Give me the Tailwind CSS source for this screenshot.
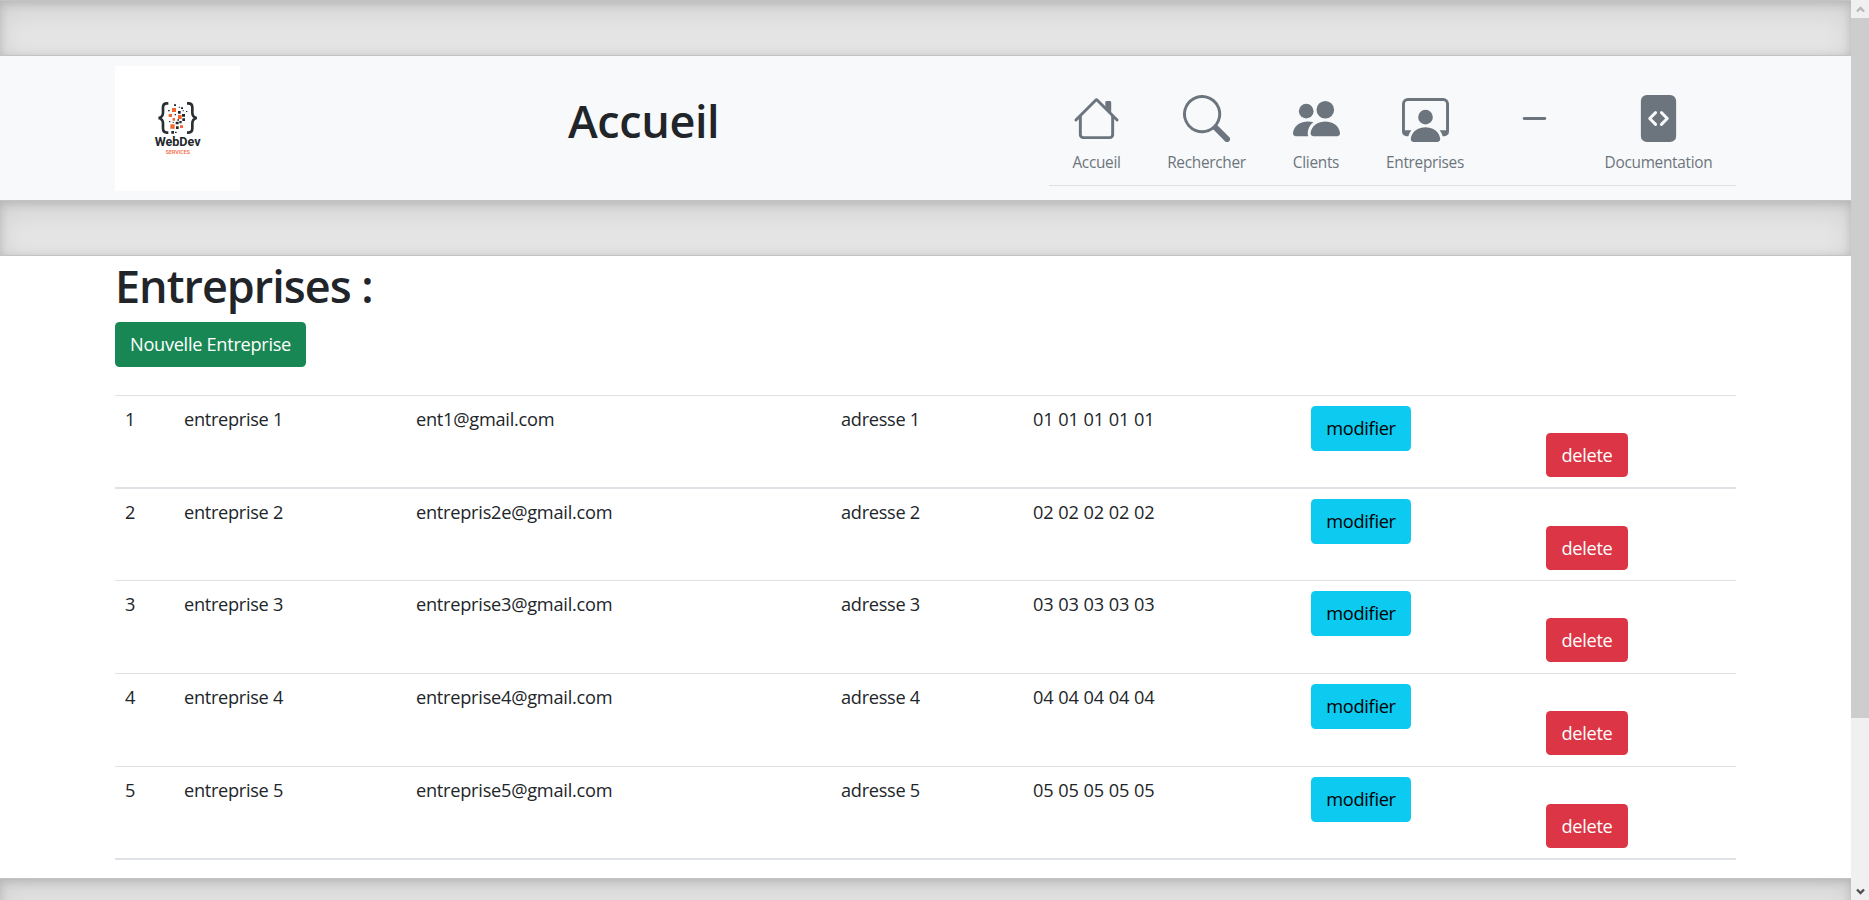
<!DOCTYPE html>
<html lang="fr">
<head>
<meta charset="utf-8">
<title>Entreprises</title>
<script src="https://cdn.jsdelivr.net/npm/@tailwindcss/browser@4"></script>
</head>
<body class="flex h-[900px] w-[1869px] overflow-hidden bg-white font-['Open_Sans','Noto_Sans',sans-serif] text-[18.2px] tracking-[-0.3px] text-[#212529]">
<div class="flex h-full w-[1851px] flex-col overflow-hidden">
  <div class="h-[56px] shrink-0 border-y border-black/15 bg-black/10 shadow-[inset_0_9.4px_28px_rgba(0,0,0,0.1),inset_0_2.3px_9.4px_rgba(0,0,0,0.15)]"></div>
  <header class="flex h-[144px] shrink-0 items-start bg-[#f8f9fa] pl-[115px] pr-[115px]">
    <svg class="mt-[10px] h-[125px] w-[125px] shrink-0" viewBox="45 48 375 375">
      <rect x="45" y="48" width="375" height="375" fill="#fff"/>
      <g fill="none" stroke="#2a2f33" stroke-width="8">
        <path d="M205 160h-4q-12 0-12 12v16q0 13-13 16q13 3 13 16v15q0 13 12 13h4"/>
        <path d="M261 160h4q12 0 12 12v16q0 13 13 16q-13 3-13 16v15q0 13-12 13h-4"/>
      </g>
      <g fill="#f4652f">
        <path d="M216 174h12v12h-12zM206 192h10v9h-10zM234 195h11v12h-11zM218 204h7v8h-7zM211 223h13v13h-13zM240 226h9v8h-9z"/>
      </g>
      <g fill="#23282c">
        <path d="M222 163h6v5h-6zM204 180h5v4h-5zM234 183h8v8h-8zM246 192h9v8h-9zM247 205h8v8h-8zM227 215h9v8h-9zM238 213h7v7h-7zM228 229h8v8h-8zM214 243h8v8h-8zM225 245h5v4h-5zM236 170h4v3h-4zM243 172h6v5h-6zM248 180h3v4h-3zM258 183h4v3h-4zM224 192h4v4h-4zM207 213h4v4h-4zM218 215h3v4h-3zM232 208h5v4h-5z"/>
      </g>
      <text x="164" y="288" textLength="138" letter-spacing="0" lengthAdjust="spacingAndGlyphs" font-family="Roboto" font-weight="700" font-size="36" fill="#23282c">WebDev</text>
      <text x="197" y="312" textLength="73" letter-spacing="0" lengthAdjust="spacingAndGlyphs" font-family="Roboto" font-weight="500" font-size="18" fill="#f4653a">SERVICES</text>
    </svg>
    <h1 class="ml-[328px] mt-[37px] w-[481px] text-[45px] leading-[56px] font-semibold tracking-[-0.4px]">Accueil</h1>
    <nav class="mt-[23px] flex h-[107px] w-[687px] shrink-0 border-b border-[#dee2e6] pt-[16px] text-[15.4px] leading-[24px] text-[#6c757d]">
      <a class="flex w-[95px] flex-col items-center gap-[9px]"><svg class="size-[47px]" viewBox="0 0 16 16" fill="currentColor"><path d="M2 13.5V7h1v6.5a.5.5 0 0 0 .5.5h9a.5.5 0 0 0 .5-.5V7h1v6.5a1.5 1.5 0 0 1-1.5 1.5h-9A1.5 1.5 0 0 1 2 13.5zm11-11V6l-2-2V2.5a.5.5 0 0 1 .5-.5h1a.5.5 0 0 1 .5.5z"/><path d="M7.293 1.5a1 1 0 0 1 1.414 0l6.647 6.646a.5.5 0 0 1-.708.708L8 2.207 1.354 8.854a.5.5 0 1 1-.708-.708L7.293 1.5z"/></svg><span>Accueil</span></a>
      <a class="flex w-[125px] flex-col items-center gap-[9px]"><svg class="size-[47px]" viewBox="0 0 16 16" fill="currentColor"><path d="M11.742 10.344a6.5 6.5 0 1 0-1.397 1.398h-.001c.03.04.062.078.098.115l3.85 3.85a1 1 0 0 0 1.415-1.414l-3.85-3.85a1.007 1.007 0 0 0-.115-.1zM12 6.5a5.5 5.5 0 1 1-11 0 5.5 5.5 0 0 1 11 0z"/></svg><span>Rechercher</span></a>
      <a class="flex w-[94px] flex-col items-center gap-[9px]"><svg class="size-[47px]" viewBox="0 0 16 16" fill="currentColor"><path d="M7 14s-1 0-1-1 1-4 5-4 5 3 5 4-1 1-1 1H7zm4-6a3 3 0 1 0 0-6 3 3 0 0 0 0 6z"/><path d="M5.216 14A2.238 2.238 0 0 1 5 13c0-1.355.68-2.75 1.936-3.72A6.325 6.325 0 0 0 5 9c-4 0-5 3-5 4s1 1 1 1h4.216z"/><path d="M4.5 8a2.5 2.5 0 1 0 0-5 2.5 2.5 0 0 0 0 5z"/></svg><span>Clients</span></a>
      <a class="flex w-[124px] flex-col items-center gap-[9px]"><svg class="size-[47px]" viewBox="0 0 16 16" fill="currentColor"><path d="M4 16s-1 0-1-1 1-4 5-4 5 3 5 4-1 1-1 1H4Zm4-5.95a2.5 2.5 0 1 0 0-5 2.5 2.5 0 0 0 0 5Z"/><path d="M2 1a2 2 0 0 0-2 2v9.5A1.5 1.5 0 0 0 1.5 14h.653a5.373 5.373 0 0 1 1.066-2H1V3a1 1 0 0 1 1-1h12a1 1 0 0 1 1 1v9h-2.219c.554.654.89 1.373 1.066 2h.653a1.5 1.5 0 0 0 1.5-1.5V3a2 2 0 0 0-2-2H2Z"/></svg><span>Entreprises</span></a>
      <a class="flex w-[94px] flex-col items-center"><svg class="size-[47px]" viewBox="0 0 16 16" fill="currentColor"><path d="M4 8a.5.5 0 0 1 .5-.5h7a.5.5 0 0 1 0 1h-7A.5.5 0 0 1 4 8z"/></svg></a>
      <a class="flex w-[155px] flex-col items-center gap-[9px]"><svg class="size-[47px]" viewBox="0 0 16 16" fill="currentColor"><path d="M12 0H4a2 2 0 0 0-2 2v12a2 2 0 0 0 2 2h8a2 2 0 0 0 2-2V2a2 2 0 0 0-2-2zM6.646 5.646a.5.5 0 1 1 .708.708L5.707 8l1.647 1.646a.5.5 0 0 1-.708.708l-2-2a.5.5 0 0 1 0-.708l2-2zm2.708 0 2 2a.5.5 0 0 1 0 .708l-2 2a.5.5 0 0 1-.708-.708L10.293 8 8.646 6.354a.5.5 0 1 1 .708-.708z"/></svg><span>Documentation</span></a>
    </nav>
  </header>
  <div class="h-[56px] shrink-0 border-y border-black/15 bg-black/10 shadow-[inset_0_9.4px_28px_rgba(0,0,0,0.1),inset_0_2.3px_9.4px_rgba(0,0,0,0.15)]"></div>
  <main class="h-[622px] shrink-0 px-[115px]">
    <h1 class="pt-[2px] text-[45px] leading-[56px] font-semibold tracking-[-1px]">Entreprises :</h1>
    <a class="mt-[8px] flex h-[45px] w-[191px] items-center justify-center rounded-[4.5px] bg-[#198754] text-white">Nouvelle Entreprise</a>
    <div class="mt-[28px] flex w-[1621px] flex-col border-t border-[#dee2e6]" id="rows"></div>
  </main>
  <div class="h-[56px] shrink-0 border-y border-black/15 bg-black/10 shadow-[inset_0_9.4px_28px_rgba(0,0,0,0.1),inset_0_2.3px_9.4px_rgba(0,0,0,0.15)]"></div>
</div>
<div class="flex h-full w-[18px] shrink-0 flex-col bg-[#f0f0f0]">
  <svg class="h-[18px] w-[18px] shrink-0" viewBox="0 0 18 18"><path d="M6 11.5 9.500 8 13 11.500" fill="none" stroke="#b8b8b8" stroke-width="2.4"/></svg>
  <div class="h-[700px] bg-[#cdcdcd]"></div>
  <svg class="mt-auto h-[18px] w-[18px] shrink-0" viewBox="0 0 18 18"><path d="M6 7.500 9.500 11 13 7.500" fill="none" stroke="#505050" stroke-width="2.4"/></svg>
</div>
<script>
const data = [
  ['1', 'entreprise 1', 'ent1@gmail.com', 'adresse 1', '01 01 01 01 01', 'h-[93px] border-b-2'],
  ['2', 'entreprise 2', 'entrepris2e@gmail.com', 'adresse 2', '02 02 02 02 02', 'h-[92px] border-b'],
  ['3', 'entreprise 3', 'entreprise3@gmail.com', 'adresse 3', '03 03 03 03 03', 'h-[93px] border-b'],
  ['4', 'entreprise 4', 'entreprise4@gmail.com', 'adresse 4', '04 04 04 04 04', 'h-[93px] border-b'],
  ['5', 'entreprise 5', 'entreprise5@gmail.com', 'adresse 5', '05 05 05 05 05', 'h-[93px] border-b-2'],
];
document.getElementById('rows').innerHTML = data.map(r => `
  <div class="flex items-start border-[#dee2e6] pt-[10px] leading-[26px] ${r[5]}">
    <div class="w-[59px] pl-[10px]">${r[0]}</div>
    <div class="w-[232px] pl-[10px]">${r[1]}</div>
    <div class="w-[425px] pl-[10px] tracking-[-0.25px]">${r[2]}</div>
    <div class="w-[192px] pl-[10px]">${r[3]}</div>
    <div class="w-[278px] pl-[10px] tracking-[-0.1px]">${r[4]}</div>
    <div class="w-[235px] pl-[10px]"><a class="flex h-[45px] w-[100px] items-center justify-center rounded-[4.5px] bg-[#0dcaf0] pb-[2px] text-black">modifier</a></div>
    <div class="pl-[10px] pt-[27px]"><a class="flex h-[44px] w-[82px] items-center justify-center rounded-[4.5px] bg-[#dc3545] text-white">delete</a></div>
  </div>`).join('');
</script>
</body>
</html>
